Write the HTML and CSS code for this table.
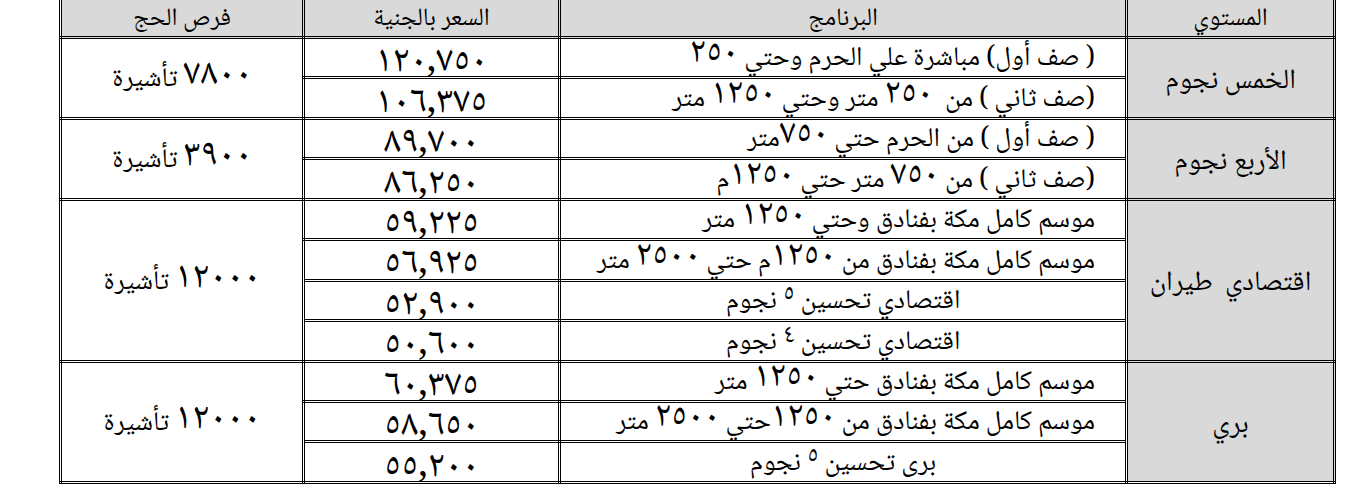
FILE: index.html
```html
<!DOCTYPE html>
<html lang="ar">
<head>
<meta charset="utf-8">
<title>أسعار الحج</title>
<link rel="stylesheet" href="styles.css">
</head>
<body>
<table class="grid" dir="rtl">
  <colgroup>
    <col class="c-lvl"><col class="c-prog"><col class="c-price"><col class="c-visa">
  </colgroup>
  <tr class="head">
    <th>المستوي</th><th>البرنامج</th><th>السعر بالجنية</th><th>فرص الحج</th>
  </tr>
  <tr>
    <td class="lvl" rowspan="2">الخمس نجوم</td>
    <td class="prog">( صف أول) مباشرة علي الحرم وحتي <span class="n">٢٥٠</span></td>
    <td class="price">١٢٠,٧٥٠</td>
    <td class="visa" rowspan="2"><span class="n">٧٨٠٠</span> تأشيرة</td>
  </tr>
  <tr>
    <td class="prog">(صف ثاني ) من &nbsp;<span class="n">٢٥٠</span> متر وحتي <span class="n">١٢٥٠</span> متر</td>
    <td class="price">١٠٦,٣٧٥</td>
  </tr>
  <tr>
    <td class="lvl" rowspan="2">الأربع نجوم</td>
    <td class="prog">( صف أول ) من الحرم حتي <span class="n">٧٥٠</span>متر</td>
    <td class="price">٨٩,٧٠٠</td>
    <td class="visa" rowspan="2"><span class="n">٣٩٠٠</span> تأشيرة</td>
  </tr>
  <tr>
    <td class="prog">(صف ثاني ) من <span class="n">٧٥٠</span> متر حتي <span class="n">١٢٥٠</span>م</td>
    <td class="price">٨٦,٢٥٠</td>
  </tr>
  <tr>
    <td class="lvl" rowspan="4">اقتصادي &nbsp;طيران</td>
    <td class="prog">موسم كامل مكة بفنادق وحتي <span class="n">١٢٥٠</span> متر</td>
    <td class="price">٥٩,٢٢٥</td>
    <td class="visa" rowspan="4"><span class="n">١٢٠٠٠</span> تأشيرة</td>
  </tr>
  <tr>
    <td class="prog">موسم كامل مكة بفنادق من <span class="n">١٢٥٠</span>م حتي <span class="n">٢٥٠٠</span> متر</td>
    <td class="price">٥٦,٩٢٥</td>
  </tr>
  <tr>
    <td class="prog mid">اقتصادي تحسين <span class="n sm">٥</span> نجوم</td>
    <td class="price">٥٢,٩٠٠</td>
  </tr>
  <tr>
    <td class="prog mid">اقتصادي تحسين <span class="n sm">٤</span> نجوم</td>
    <td class="price">٥٠,٦٠٠</td>
  </tr>
  <tr>
    <td class="lvl" rowspan="3">بري</td>
    <td class="prog">موسم كامل مكة بفنادق حتي <span class="n">١٢٥٠</span> متر</td>
    <td class="price">٦٠,٣٧٥</td>
    <td class="visa" rowspan="3"><span class="n">١٢٠٠٠</span> تأشيرة</td>
  </tr>
  <tr>
    <td class="prog">موسم كامل مكة بفنادق من <span class="n">١٢٥٠</span>حتي <span class="n">٢٥٠٠</span> متر</td>
    <td class="price">٥٨,٦٥٠</td>
  </tr>
  <tr>
    <td class="prog mid">برى تحسين <span class="n sm">٥</span> نجوم</td>
    <td class="price">٥٥,٢٠٠</td>
  </tr>
</table>
</body>
</html>
```

FILE: styles.css
```css
html, body {
  margin: 0;
  padding: 0;
  background: #ffffff;
}

body {
  font-family: "Noto Naskh Arabic", "Amiri", "Scheherazade New", "Noto Sans Arabic", "DejaVu Sans", sans-serif;
  color: #000000;
}

.grid {
  border-collapse: collapse;
  width: 1277px;
  margin: -4px 0 0 59px;
  border: 3px double #000000;
  table-layout: fixed;
}

.c-lvl { width: 208px; }
.c-prog { width: 567px; }
.c-price { width: 256px; }
.c-visa { width: 243px; }

.grid th,
.grid td {
  border: 3px double #000000;
  padding: 0;
  font-size: 20px;
  font-weight: normal;
  line-height: 1;
  text-align: center;
  vertical-align: middle;
  overflow: visible;
}

.grid .head th {
  height: 33px;
  font-size: 25px;
  line-height: 24px;
  background: #d9d9d9;
  padding-top: 4px;
}

.grid tr:not(.head) {
  height: 40.45px;
}

.grid .lvl {
  background: #d9d9d9;
  font-size: 28px;
  line-height: 28px;
  padding-top: 8px;
}

.grid .prog {
  font-size: 27px;
  line-height: 27px;
  text-align: right;
  padding-right: 30px;
  vertical-align: bottom;
  padding-bottom: 3px;
}

.grid .prog.mid {
  text-align: center;
  padding-right: 0;
}

.grid .price {
  font-size: 38px;
  line-height: 20px;
  letter-spacing: 3px;
  vertical-align: middle;
  padding-top: 11px;
}

.grid .visa {
  font-size: 27px;
  line-height: 27px;
  padding-top: 6px;
}

.n {
  font-size: 36px;
  letter-spacing: 2px;
  line-height: 0;
  position: relative;
  top: -3px;
}

.n.sm {
  font-size: 26px;
  top: -7px;
}

.visa .n {
  font-size: 38px;
  letter-spacing: 5px;
  top: -2px;
}
```
